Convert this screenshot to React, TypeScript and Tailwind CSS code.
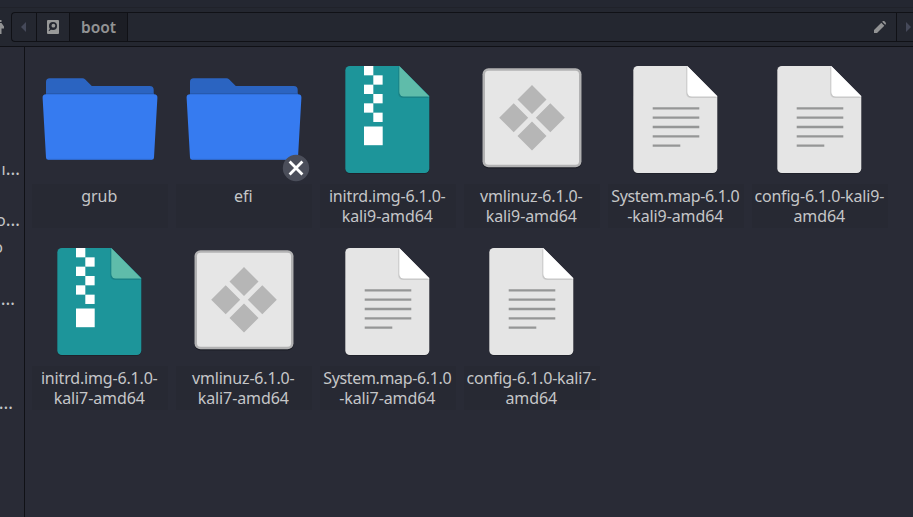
import React from "react";

type Kind = "folder" | "archive" | "kernel" | "text";
type Entry = { kind: Kind; lines: string[]; denied?: boolean };

const entries: Entry[] = [
  { kind: "folder", lines: ["grub"] },
  { kind: "folder", lines: ["efi"], denied: true },
  { kind: "archive", lines: ["initrd.img-6.1.0-", "kali9-amd64"] },
  { kind: "kernel", lines: ["vmlinuz-6.1.0-", "kali9-amd64"] },
  { kind: "text", lines: ["System.map-6.1.0", "-kali9-amd64"] },
  { kind: "text", lines: ["config-6.1.0-kali9-", "amd64"] },
  { kind: "archive", lines: ["initrd.img-6.1.0-", "kali7-amd64"] },
  { kind: "kernel", lines: ["vmlinuz-6.1.0-", "kali7-amd64"] },
  { kind: "text", lines: ["System.map-6.1.0", "-kali7-amd64"] },
  { kind: "text", lines: ["config-6.1.0-kali7-", "amd64"] },
];

function Folder() {
  return (
    <>
      <path d="M10 42V26a3.7 3.7 0 0 1 3.7-3.7H46.5q1.5 0 2.5 1L55.800 30H113.700a4 4 0 0 1 4 4V42Z" fill="#2b64c1" />
      <path d="M10 37.200H117.700V39H10Z" fill="#2657a9" />
      <path d="M10 38.200H118a3.400 3.400 0 0 1 3.400 3.600L118 101.400a2.300 2.300 0 0 1-2.300 2.300H12.300a2.300 2.300 0 0 1-2.300-2.300L6.600 41.800A3.400 3.400 0 0 1 10 38.200Z" fill="#367bf0" />
      <path d="M12 103.300H116" stroke="#3069ce" strokeWidth="0.8" />
    </>
  );
}

function Sheet({ body, fold }: { body: string; fold: string }) {
  const shape = "M25.500 10H75L105 40V112.500a4.500 4.500 0 0 1-4.500 4.500H25.500a4.500 4.500 0 0 1-4.500-4.500V14.500A4.500 4.500 0 0 1 25.500 10Z";
  return (
    <g transform="translate(0.3 0)">
      <path d={shape} transform="translate(0 0.8)" fill="#1e2028" />
      <path d={shape} fill={body} />
      <path d="M73.700 11V37.500a4.500 4.500 0 0 0 4.500 4.500H104.500Z" fill="#000" opacity="0.06" />
      <path d="M74.300 10V37.200a4.500 4.500 0 0 0 4.500 4.500H105Z" fill="#000" opacity="0.08" />
      <path d="M75 10V36a4.500 4.500 0 0 0 4.500 4.500H105Z" fill={fold} />
    </g>
  );
}

function Archive() {
  return (
    <>
      <Sheet body="#1d959a" fold="#5fbcaa" />
      {[0, 1, 2, 3, 4, 5].map((i) => (
        <rect key={i} x={i % 2 ? 49.300 : 40} y={10 + i * 9.330} width="9.330" height="9.330" fill="#fff" />
      ))}
      <rect x="40" y="70.500" width="18.700" height="18.700" fill="#fff" />
    </>
  );
}

function Kernel() {
  return (
    <>
      <rect x="14.500" y="13" width="99" height="99.500" rx="6" fill="#1d1f27" />
      <rect x="14.500" y="12.300" width="99" height="99" rx="6" fill="#b2b2b3" />
      <rect x="17" y="14.800" width="94" height="94" rx="3.500" fill="#e6e6e6" />
      <path d="M64 29l14.500 14.500L64 58 49.500 43.500ZM45.700 47.300l14.500 14.500-14.500 14.500L31.200 61.800ZM82.300 47.300l14.500 14.500-14.500 14.500L67.800 61.800ZM64 65.600l14.500 14.500L64 94.600 49.500 80.100Z" fill="#b6b6b6" />
    </>
  );
}

function TextFile() {
  return (
    <>
      <Sheet body="#e5e5e5" fold="#fff" />
      <path d="M40.700 52.400H87.300M40.700 61.700H87.300M40.700 71H87.300M40.700 80.400H87.300M40.700 89.700H68.300" stroke="#959696" strokeWidth="2.300" />
    </>
  );
}

const drawings: Record<Kind, () => React.JSX.Element> = {
  folder: Folder,
  archive: Archive,
  kernel: Kernel,
  text: TextFile,
};

// Letter spacing of a label's first line, by kind of file.
const firstLineTracking: Record<Kind, string> = {
  folder: "tracking-normal",
  archive: "tracking-[-0.17px]",
  kernel: "tracking-[-0.17px]",
  text: "tracking-[-0.18px]",
};

function tracking(entry: Entry, index: number) {
  if (index > 0) return "tracking-[-0.1px]";
  if (entry.lines[0].startsWith("System")) return "tracking-[-0.35px]";
  return firstLineTracking[entry.kind];
}

function FileItem({ entry }: { entry: Entry }) {
  const Drawing = drawings[entry.kind];
  return (
    <div className="flex h-[182px] flex-col items-center">
      <svg width="128" height="128" viewBox="0 0 128 128" className="shrink-0 overflow-visible">
        <Drawing />
        {entry.denied && (
          <g>
            <circle cx="116" cy="112" r="13.200" fill="#4b4e5a" />
            <path d="M109.600 105.600l12.800 12.800M122.400 105.600l-12.800 12.800" stroke="#fff" strokeWidth="2.800" />
          </g>
        )}
      </svg>
      <div className="h-11 w-[136px] bg-[#272933] pt-0.5 pr-[1.5px] text-center text-base leading-5 whitespace-nowrap text-[#c5c6c8]">
        {entry.lines.map((line, index) => (
          <div key={line} className={`flex justify-center ${tracking(entry, index)}`}>{line}</div>
        ))}
      </div>
    </div>
  );
}

function PathBar() {
  return (
    <header className="flex h-[47px] shrink-0 flex-col border-b border-[#101116] bg-[#242730]">
      <div className="h-2 shrink-0 border-b border-[#20222a] bg-[#242731]" />
      <div className="flex pt-1">
        <div className="flex h-[30px] w-[11px] items-center">
          <svg width="5" height="16" viewBox="0 0 5 16">
            <path d="M0 1H1.500V3H0ZM0 4H1.500L4 7.500V9.500H1.500V15H0Z" fill="#929394" />
          </svg>
        </div>
        <div className="flex h-[30px] flex-1 rounded-l-[4px] border-y border-l border-[#101116]">
          <div className="flex w-[25px] items-center border-r border-[#101116] pl-[9px]">
            <svg width="6" height="10" viewBox="0 0 6 10"><path d="M5 0V10L0 5Z" fill="#454959" /></svg>
          </div>
          <div className="flex w-[33px] items-center justify-center border-r border-[#101116]">
            <svg width="12" height="14" viewBox="0 0 12 14">
              <rect width="12" height="14" rx="1" fill="#989999" />
              <circle cx="6" cy="6" r="4" fill="#242730" />
              <circle cx="6.400" cy="5.700" r="1.900" fill="#989999" />
              <path d="M1.500 10.500L4.300 7.300 5.200 8.200 2.500 11Z" fill="#242730" />
            </svg>
          </div>
          <div className="flex w-[58px] items-center justify-center border-r border-[#101116] bg-[#1c1e25] text-[15.500px] leading-[27px] font-semibold text-[#929394]">boot</div>
          <div className="flex flex-1 items-center justify-end border-r border-[#101116] pr-2.5">
            <svg width="12" height="12" viewBox="0 0 12 12">
              <path d="M0 9L7.300 1.700 10.300 4.700 3 12H0ZM8.200 .8L9 0Q10-.3 11 .7T12 3L11.200 3.800Z" fill="#929394" />
            </svg>
          </div>
          <div className="flex w-4 items-center pl-[9px]">
            <svg width="6" height="10" viewBox="0 0 6 10"><path d="M0 0V10L5 5Z" fill="#454959" /></svg>
          </div>
        </div>
      </div>
    </header>
  );
}

function Dots() {
  return <span className="text-[18px] leading-5">…</span>;
}

function Sidebar() {
  return (
    <aside className="flex w-[25px] shrink-0 flex-col overflow-hidden border-r border-[#101116] text-base leading-5 whitespace-nowrap text-[#c5c6c8]">
      <div className="mt-[111px] flex h-5 w-5 items-baseline justify-end">ı<Dots /></div>
      <div className="mt-[31px] flex h-5 w-5 items-baseline justify-end">o<Dots /></div>
      <div className="mt-2 flex h-5 w-[3px] items-baseline justify-end">o</div>
      <div className="mt-[31px] flex h-5 w-[15px] items-baseline justify-end"><Dots /></div>
      <div className="mt-[84px] flex h-5 w-[13px] items-baseline justify-end"><Dots /></div>
    </aside>
  );
}

export default function App() {
  return (
    <div className="flex h-[517px] w-[913px] flex-col overflow-hidden bg-[#292b36] font-['Noto_Sans',sans-serif]">
      <PathBar />
      <div className="flex min-h-0 flex-1">
        <Sidebar />
        <main className="grid flex-1 grid-cols-[repeat(6,144px)] content-start pt-[9px] pl-[3px]">
          {entries.map((entry) => (
            <FileItem key={entry.lines.join("")} entry={entry} />
          ))}
        </main>
      </div>
    </div>
  );
}
